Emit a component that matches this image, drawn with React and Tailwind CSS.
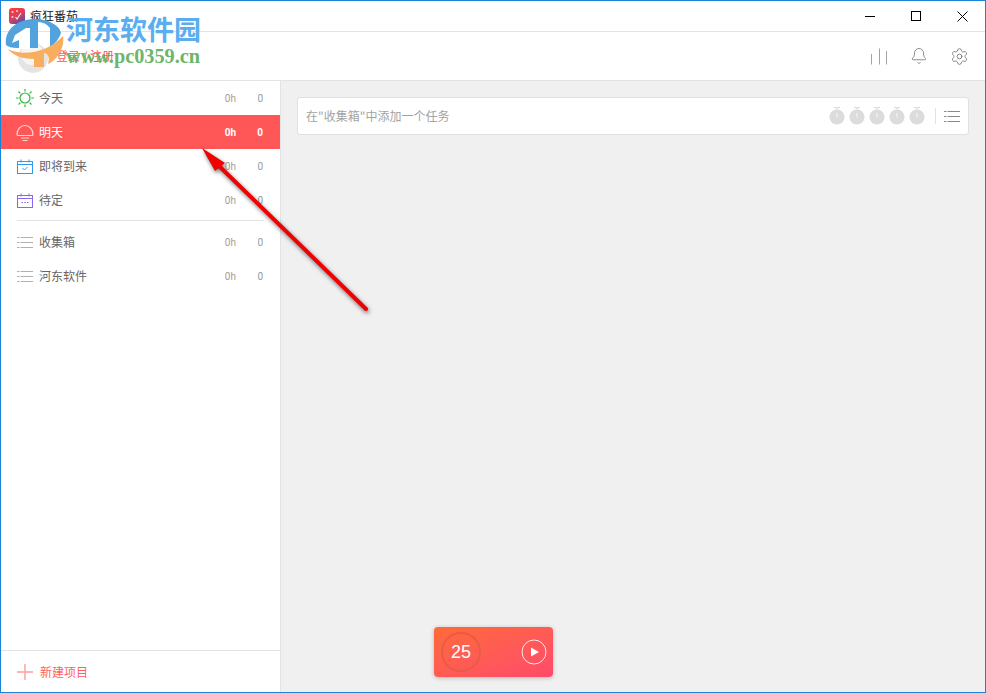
import React from 'react'
import { Bell, Settings } from 'lucide-react'

const font = { fontFamily: '"Noto Sans CJK SC", sans-serif' }

function SunIcon() {
  return (
    <svg width="18" height="18" viewBox="0 0 18 18" fill="none" stroke="#2eb83c" strokeWidth="1.2">
      <circle cx="9" cy="9" r="5" />
      <path d="M9 0V2.6M9 15.4V18M0 9H2.6M15.4 9H18M2.5 2.5L4.4 4.4M13.6 13.6L15.5 15.5M15.5 2.5L13.6 4.4M4.4 13.6L2.5 15.5" />
    </svg>
  )
}

function DomeIcon() {
  return (
    <svg width="18" height="18" viewBox="0 0 18 18" fill="none" stroke="#ffd6d6" strokeWidth="1.2">
      <path d="M1 11.5C1 6.5 4.5 2.5 9 2.5C13.5 2.5 17 6.5 17 11.5C17 12 16.5 12.5 16 12.5H2C1.5 12.5 1 12 1 11.5Z" />
      <path d="M5 15H13M6.5 17.5H11.5" />
    </svg>
  )
}

function CalendarCheckIcon() {
  return (
    <svg width="16" height="15" viewBox="0 0 16 15" fill="none" stroke="#2f9bf0" strokeWidth="1">
      <rect x="0.5" y="2.5" width="15" height="12" />
      <path d="M0.5 5.5H15.5M4 0.5V3.5M12 0.5V3.5" />
      <path d="M5.5 9L7.5 11L10.5 8" />
    </svg>
  )
}

function CalendarDotsIcon() {
  return (
    <svg width="16" height="15" viewBox="0 0 16 15" fill="none" stroke="#8b67ee" strokeWidth="1">
      <rect x="0.5" y="2.5" width="15" height="12" />
      <path d="M0.5 5.5H15.5M4 0.5V3.5M12 0.5V3.5" />
      <path d="M4.5 9.5H6M7.3 9.5H8.8M10 9.5H11.5" />
    </svg>
  )
}

function ListIcon({ color = '#b0b0b0' }) {
  return (
    <svg width="16" height="11" viewBox="0 0 16 11" fill="none" stroke={color} strokeWidth="1">
      <path d="M0 0.5H2.5M3.5 0.5H16M0 5.5H2.5M3.5 5.5H16M0 10.5H2.5M3.5 10.5H16" />
    </svg>
  )
}

function BarsIcon() {
  return (
    <svg width="18" height="17" viewBox="0 0 18 17" fill="none" stroke="#a3a3a3" strokeWidth="1">
      <path d="M1.5 6V16.5M9.5 0.5V16.5M16.5 3V16.5" />
    </svg>
  )
}

function StopwatchIcon() {
  return (
    <svg width="16" height="18" viewBox="0 0 16 18" fill="#dcdcdc">
      <rect x="5" y="0" width="6" height="1.2" />
      <rect x="7.5" y="1" width="1" height="2" />
      <circle cx="8" cy="10" r="7.6" />
      <rect x="7.5" y="6" width="1" height="4.5" fill="#f8f8f8" />
    </svg>
  )
}

function SidebarRow({ icon, label, active }) {
  return (
    <div className={`flex items-center h-[34px] pl-[15px] pr-[17px] ${active ? 'bg-[#ff5757] text-white font-bold' : 'text-[#666666]'}`}>
      <div className="w-[18px] flex justify-center shrink-0">{icon}</div>
      <span className={`ml-[5px] text-[12px] flex-1 ${active ? 'font-normal' : ''}`}>{label}</span>
      <span className={`text-[10px] w-[12px] text-right ${active ? '' : 'text-[#ad9a8e]'}`} style={{ fontFamily: 'Roboto, sans-serif' }}>0h</span>
      <span className={`text-[10px] w-[27px] text-right ${active ? '' : 'text-[#8f9ba6]'}`} style={{ fontFamily: 'Roboto, sans-serif' }}>0</span>
    </div>
  )
}

function WatermarkLogo() {
  return (
    <svg className="absolute left-[4px] top-[17px]" width="60" height="56" viewBox="0 0 60 56">
      <circle cx="28" cy="40" r="15" fill="#e4e4e4" />
      <circle cx="27" cy="36" r="11" fill="#f5f5f5" />
      <path d="M1 27C-1 12 12 1 30 1C44 1 55 8 56 15C54 21 50 26 45 29V10C42 6 38 4 33 4V30H12C7 30 3 29 1 27Z" fill="#52a2de" />
      <path d="M10 17L21 10H25V31H14V22L7 25Z" fill="#ffffff" />
      <path d="M3 31C18 39 44 34 58 18C60 30 52 42 43 46C45 40 43 35 39 35V49H29V41C17 41 7 37 3 31Z" fill="#f7ae5e" />
    </svg>
  )
}

export default function App() {
  return (
    <div className="relative w-[986px] h-[693px] overflow-hidden bg-white border border-[#1883d7] flex flex-col" style={font}>
      {/* Title bar */}
      <div className="h-[30px] flex items-center shrink-0 border-b border-[#e3e3e3] box-content">
        <svg className="ml-[8px]" width="16" height="16" viewBox="0 0 16 16">
          <defs>
            <linearGradient id="appIcon" x1="0" y1="0" x2="0.6" y2="1">
              <stop offset="0.1" stopColor="#ff3b3b" />
              <stop offset="0.6" stopColor="#d6405f" />
              <stop offset="1" stopColor="#5a4fa8" />
            </linearGradient>
          </defs>
          <rect width="16" height="16" rx="3" fill="url(#appIcon)" />
          <circle cx="3.5" cy="4" r="1" fill="#ffd5d5" />
          <circle cx="8" cy="3" r="1" fill="#ffd5d5" />
          <circle cx="3.5" cy="9" r="1" fill="#ffd5d5" />
          <path d="M6.5 9L8 11L12 5" fill="none" stroke="#ffe5e5" strokeWidth="1.2" />
        </svg>
        <span className="ml-[5px] text-[12px] text-[#222222]">疯狂番茄</span>
        <div className="ml-auto flex items-center">
          <div className="w-[46px] flex justify-center"><div className="w-[10px] h-px bg-black" /></div>
          <div className="w-[46px] flex justify-center"><div className="w-[10px] h-[10px] border border-black" /></div>
          <div className="w-[46px] flex justify-center">
            <svg width="11" height="11" viewBox="0 0 11 11" stroke="#000000" fill="none"><path d="M0.5 0.5L10.5 10.5M10.5 0.5L0.5 10.5" /></svg>
          </div>
        </div>
      </div>

      {/* Header */}
      <div className="h-[48px] flex items-center shrink-0 border-b border-[#e3e3e3] box-content">
        <span className="ml-[55px] text-[12px] text-[#ff5757]">登录 / 注册</span>
        <div className="ml-auto flex items-center gap-[22px] pr-[16px]">
          <BarsIcon />
          <Bell size={18} strokeWidth={1.1} color="#777777" />
          <Settings size={19} strokeWidth={1.1} color="#777777" />
        </div>
      </div>

      {/* Body */}
      <div className="flex flex-1 min-h-0">
        <aside className="w-[279px] shrink-0 border-r border-[#e3e3e3] box-content flex flex-col">
          <SidebarRow icon={<SunIcon />} label="今天" />
          <SidebarRow icon={<DomeIcon />} label="明天" active />
          <SidebarRow icon={<CalendarCheckIcon />} label="即将到来" />
          <SidebarRow icon={<CalendarDotsIcon />} label="待定" />
          <div className="mx-[16px] mt-[3px] mb-[4px] h-px bg-[#e3e3e3]" />
          <SidebarRow icon={<ListIcon />} label="收集箱" />
          <SidebarRow icon={<ListIcon />} label="河东软件" />
          <div className="mt-auto h-[41px] border-t border-[#e3e3e3] box-content flex items-center pl-[16px]">
            <svg width="16" height="16" viewBox="0 0 16 16" stroke="#ff9c9c" strokeWidth="1.4" fill="none"><path d="M8 0V16M0 8H16" /></svg>
            <span className="ml-[7px] text-[12px] text-[#ff5f5f]">新建项目</span>
          </div>
        </aside>

        <main className="relative flex-1 bg-[#f0f0f0] px-[16px] pt-[16px]">
          <div className="h-[38px] bg-white border border-[#e0e0e0] rounded-[3px] flex items-center pl-[8px] pr-[8px]">
            <span className="text-[12px] text-[#a3a3a3]">在"收集箱"中添加一个任务</span>
            <div className="ml-auto flex items-center gap-[4px]">
              <StopwatchIcon />
              <StopwatchIcon />
              <StopwatchIcon />
              <StopwatchIcon />
              <StopwatchIcon />
            </div>
            <div className="ml-[10px] mr-[8px] w-px h-[16px] bg-[#e3e3e3]" />
            <ListIcon color="#8a8a8a" />
          </div>

          {/* Timer */}
          <div className="absolute left-[153px] bottom-[15px] w-[119px] h-[50px] rounded-[4px] bg-gradient-to-br from-[#ff6a36] to-[#ff4a6a] shadow-[0_1px_4px_rgba(0,0,0,0.25)] flex items-center justify-between pl-[7px] pr-[6px]">
            <div className="w-[40px] h-[40px] rounded-full border-2 border-[#e85c45] flex items-center justify-center text-white text-[18px] font-medium" style={{ fontFamily: '"Liberation Sans", sans-serif' }}>25</div>
            <svg width="26" height="26" viewBox="0 0 26 26" fill="none">
              <circle cx="13" cy="13" r="12" stroke="#ffffff" strokeOpacity="0.85" strokeWidth="1" />
              <path d="M10 8.5L18 13L10 17.5Z" fill="#ffffff" />
            </svg>
          </div>
        </main>
      </div>

      {/* Screenshot annotations over the app */}
      <WatermarkLogo />
      <div className="absolute left-[65px] top-[10px] text-[27px] leading-[36px] font-bold text-[#5aaef0] whitespace-nowrap" style={{ fontFamily: '"Noto Sans CJK SC", "Liberation Serif", serif' }}>河东软件园</div>
      <div className="absolute left-[65px] top-[44px] text-[20.3px] leading-[22px] font-bold text-[#6db56a] whitespace-nowrap" style={{ fontFamily: '"Liberation Serif", serif' }}>www.pc0359.cn</div>
      <svg className="absolute left-[190px] top-[135px] drop-shadow-[1px_2px_2px_rgba(0,0,0,0.55)]" width="190" height="185" viewBox="0 0 190 185">
        <path d="M27 29L175 173" stroke="#f00000" strokeWidth="4" strokeLinecap="round" />
        <path d="M11 12L34 27L24 35Z" fill="#f00000" />
      </svg>
    </div>
  )
}
